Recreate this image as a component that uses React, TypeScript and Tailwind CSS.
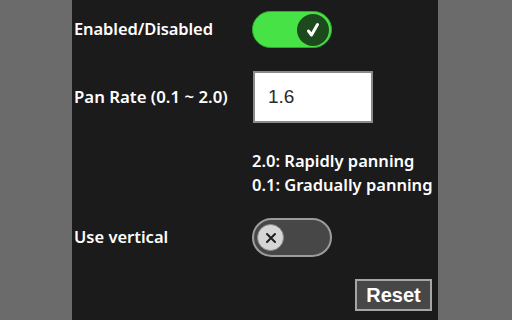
import React from "react";

const font = { fontFamily: '"Noto Sans", "Open Sans", sans-serif' };

export default function App() {
  return (
    <div className="h-[320px] w-[512px] bg-[#6b6b6b] flex pl-[72px]">
      <div
        className="w-[366px] h-full bg-[#1b1b1b] text-white flex flex-col pl-[2px] pt-[11px]"
        style={font}
      >
        {/* Row 1 */}
        <div className="flex items-center h-[37px]">
          <div className="w-[178px] text-[16.5px] font-semibold tracking-[-0.1px]">Enabled/Disabled</div>
          <div className="w-[80px] h-[37px] rounded-full bg-[#46e246] border border-[#2fa82f] flex items-center justify-end pr-[2px]">
            <div className="w-[32px] h-[32px] rounded-full bg-[#1c4a1c] flex items-center justify-center">
              <svg width="18" height="18" viewBox="0 0 18 18">
                <path d="M4.5 10 L7.5 14 L13.5 3.5" stroke="#ffffff" strokeWidth="3" fill="none" strokeLinecap="round" strokeLinejoin="round" />
              </svg>
            </div>
          </div>
        </div>
        {/* Row 2 */}
        <div className="flex items-center mt-[23px] h-[52px]">
          <div className="w-[179px] text-[16.8px] font-semibold">Pan Rate (0.1 ~ 2.0)</div>
          <div
            className="w-[120px] h-[52px] bg-white border-2 border-[#8a8a8a] flex items-center pl-[13px] text-[19px] text-[#2a2a2a]"
            style={{ fontFamily: '"Liberation Sans", Arial, sans-serif' }}
          >
            1.6
          </div>
        </div>
        {/* Help */}
        <div className="flex mt-[26px]">
          <div className="w-[178px]" />
          <div className="text-[16.5px] font-semibold leading-[24px]">
            <div>2.0: Rapidly panning</div>
            <div>0.1: Gradually panning</div>
          </div>
        </div>
        {/* Row 3 */}
        <div className="flex items-center mt-[21px] h-[39px]">
          <div className="w-[178px] text-[16.5px] font-semibold">Use vertical</div>
          <div className="w-[80px] h-[39px] rounded-full bg-[#474747] border-2 border-[#9c9c9c] flex items-center pl-[3px]">
            <div className="w-[27px] h-[27px] rounded-full bg-[#d6d6d6] border border-[#8a8a8a] flex items-center justify-center">
              <svg width="14" height="14" viewBox="0 0 14 14">
                <path d="M3 3 L11 11 M11 3 L3 11" stroke="#1e1e1e" strokeWidth="2" strokeLinecap="round" />
              </svg>
            </div>
          </div>
        </div>
        {/* Reset */}
        <div className="flex justify-end mt-[22px] pr-[6px]">
          <button
            className="w-[77px] h-[32px] bg-[#474747] border-2 border-[#a6a6a6] text-white text-[20px] font-bold flex items-center justify-center"
            style={{ fontFamily: '"Liberation Sans", Arial, sans-serif' }}
          >
            Reset
          </button>
        </div>
      </div>
    </div>
  );
}
